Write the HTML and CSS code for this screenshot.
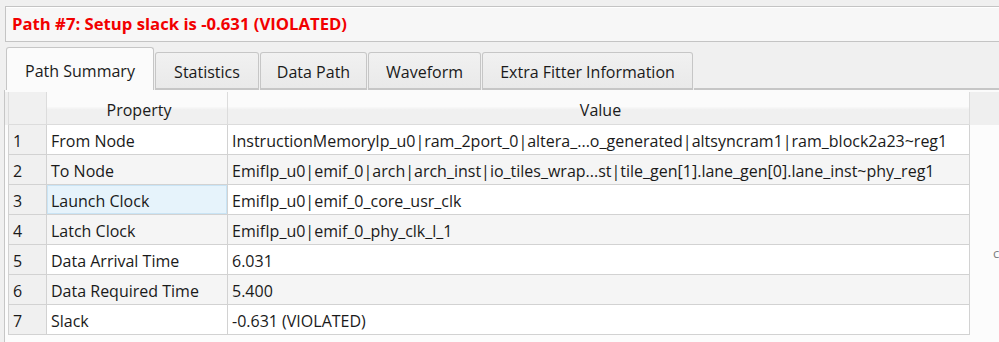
FILE: index.html
```html
<!DOCTYPE html>
<html lang="en">
<head>
  <meta charset="UTF-8">
  <title>Path #7 Report</title>
  <link rel="stylesheet" href="styles.css">
</head>
<body>
  <div class="report">
    <div class="title-box">Path #7: Setup slack is -0.631 (VIOLATED)</div>

    <div class="tabs">
      <div class="tab active tab-summary">Path Summary</div>
      <div class="tab tab-stats">Statistics</div>
      <div class="tab tab-data">Data Path</div>
      <div class="tab tab-wave">Waveform</div>
      <div class="tab tab-extra">Extra Fitter Information</div>
      <div class="tab-fill"></div>
    </div>

    <div class="panel">
      <table class="summary">
        <thead>
          <tr>
            <th class="num"></th>
            <th class="prop">Property</th>
            <th>Value</th>
          </tr>
        </thead>
        <tbody>
          <tr><td class="num">1</td><td>From Node</td><td>InstructionMemoryIp_u0|ram_2port_0|altera_...o_generated|altsyncram1|ram_block2a23~reg1</td></tr>
          <tr><td class="num">2</td><td>To Node</td><td>EmifIp_u0|emif_0|arch|arch_inst|io_tiles_wrap...st|tile_gen[1].lane_gen[0].lane_inst~phy_reg1</td></tr>
          <tr><td class="num">3</td><td class="selected">Launch Clock</td><td>EmifIp_u0|emif_0_core_usr_clk</td></tr>
          <tr><td class="num">4</td><td>Latch Clock</td><td>EmifIp_u0|emif_0_phy_clk_l_1</td></tr>
          <tr><td class="num">5</td><td>Data Arrival Time</td><td>6.031</td></tr>
          <tr><td class="num">6</td><td>Data Required Time</td><td>5.400</td></tr>
          <tr><td class="num">7</td><td>Slack</td><td>-0.631 (VIOLATED)</td></tr>
        </tbody>
      </table>
      <span class="stray">c</span>
    </div>
  </div>
</body>
</html>
```

FILE: styles.css
```css
html, body {
  margin: 0;
  padding: 0;
  background: #f0f0f0;
  font-family: "Open Sans", sans-serif;
  font-size: 16px;
  color: #1a1a1a;
  overflow: hidden;
}
.report {
  width: 999px;
  height: 342px;
  padding-top: 6px;
  box-sizing: border-box;
}
.title-box {
  margin-left: 5px;
  height: 34px;
  line-height: 34px;
  padding-left: 6px;
  background: #f7f7f7;
  border: 1px solid #c4c4c4;
  border-right: none;
  box-shadow: inset 0 1px 0 #fff;
  color: #f20000;
  font-weight: bold;
  font-size: 16.7px;
}
.tabs {
  display: flex;
  align-items: flex-end;
  margin-top: 5px;
  padding-left: 6px;
  height: 43px;
}
.tab {
  height: 38px;
  line-height: 36px;
  padding-top: 1px;
  margin-right: 1px;
  box-sizing: border-box;
  text-align: center;
  background: linear-gradient(#f1f1f1, #e9e9e9);
  border: 1px solid #c6c6c6;
  border-bottom: 2px solid #c6c6c6;
  border-radius: 3px 3px 0 0;
  white-space: nowrap;
}
.tab.active {
  height: 43px;
  line-height: 38px;
  padding-top: 4px;
  background: #fbfbfb;
  border-bottom: none;
}
.tab-summary { width: 148px; }
.tab-stats { width: 104px; }
.tab-data { width: 107px; }
.tab-wave { width: 113px; }
.tab-extra { width: 211px; }
.tab-fill {
  flex: 1;
  height: 2px;
  background: #c6c6c6;
}
.panel {
  position: relative;
  margin-left: 4px;
  height: 252px;
  padding: 2px 0 0 3px;
  border-left: 1px solid #c6c6c6;
  background: linear-gradient(#fbfbfb 0 2px, #efefef 2px 35px, #fcfcfc 35px);
}
.summary {
  width: 962px;
  border-collapse: collapse;
  table-layout: fixed;
  background: #fff;
}
.summary th,
.summary td {
  border: 1px solid #d2d2d2;
  padding: 3px 0 0 4px;
  white-space: nowrap;
  overflow: hidden;
  text-align: left;
  font-weight: normal;
}
.summary th {
  height: 29px;
  text-align: center;
  background: linear-gradient(#fbfbfb 45%, #f0f0f0 55%);
  border-top: none;
  border-color: #dcdcdc;
}
.summary th.num {
  width: 33px;
  background: #f0f0f0;
}
.summary th.prop {
  width: 176px;
}
.summary td {
  height: 26px;
}
.summary tbody tr:nth-child(even) td {
  background: #f5f5f5;
}
.summary td.num,
.summary tbody tr:nth-child(even) td.num {
  background: #f0f0f0;
}
.summary td.selected {
  background: #e6f3fb;
  box-shadow: inset 0 0 0 1px #c9e4f5;
}
.stray {
  position: absolute;
  left: 988px;
  top: 154px;
  color: #808080;
  font-size: 13px;
}
```
